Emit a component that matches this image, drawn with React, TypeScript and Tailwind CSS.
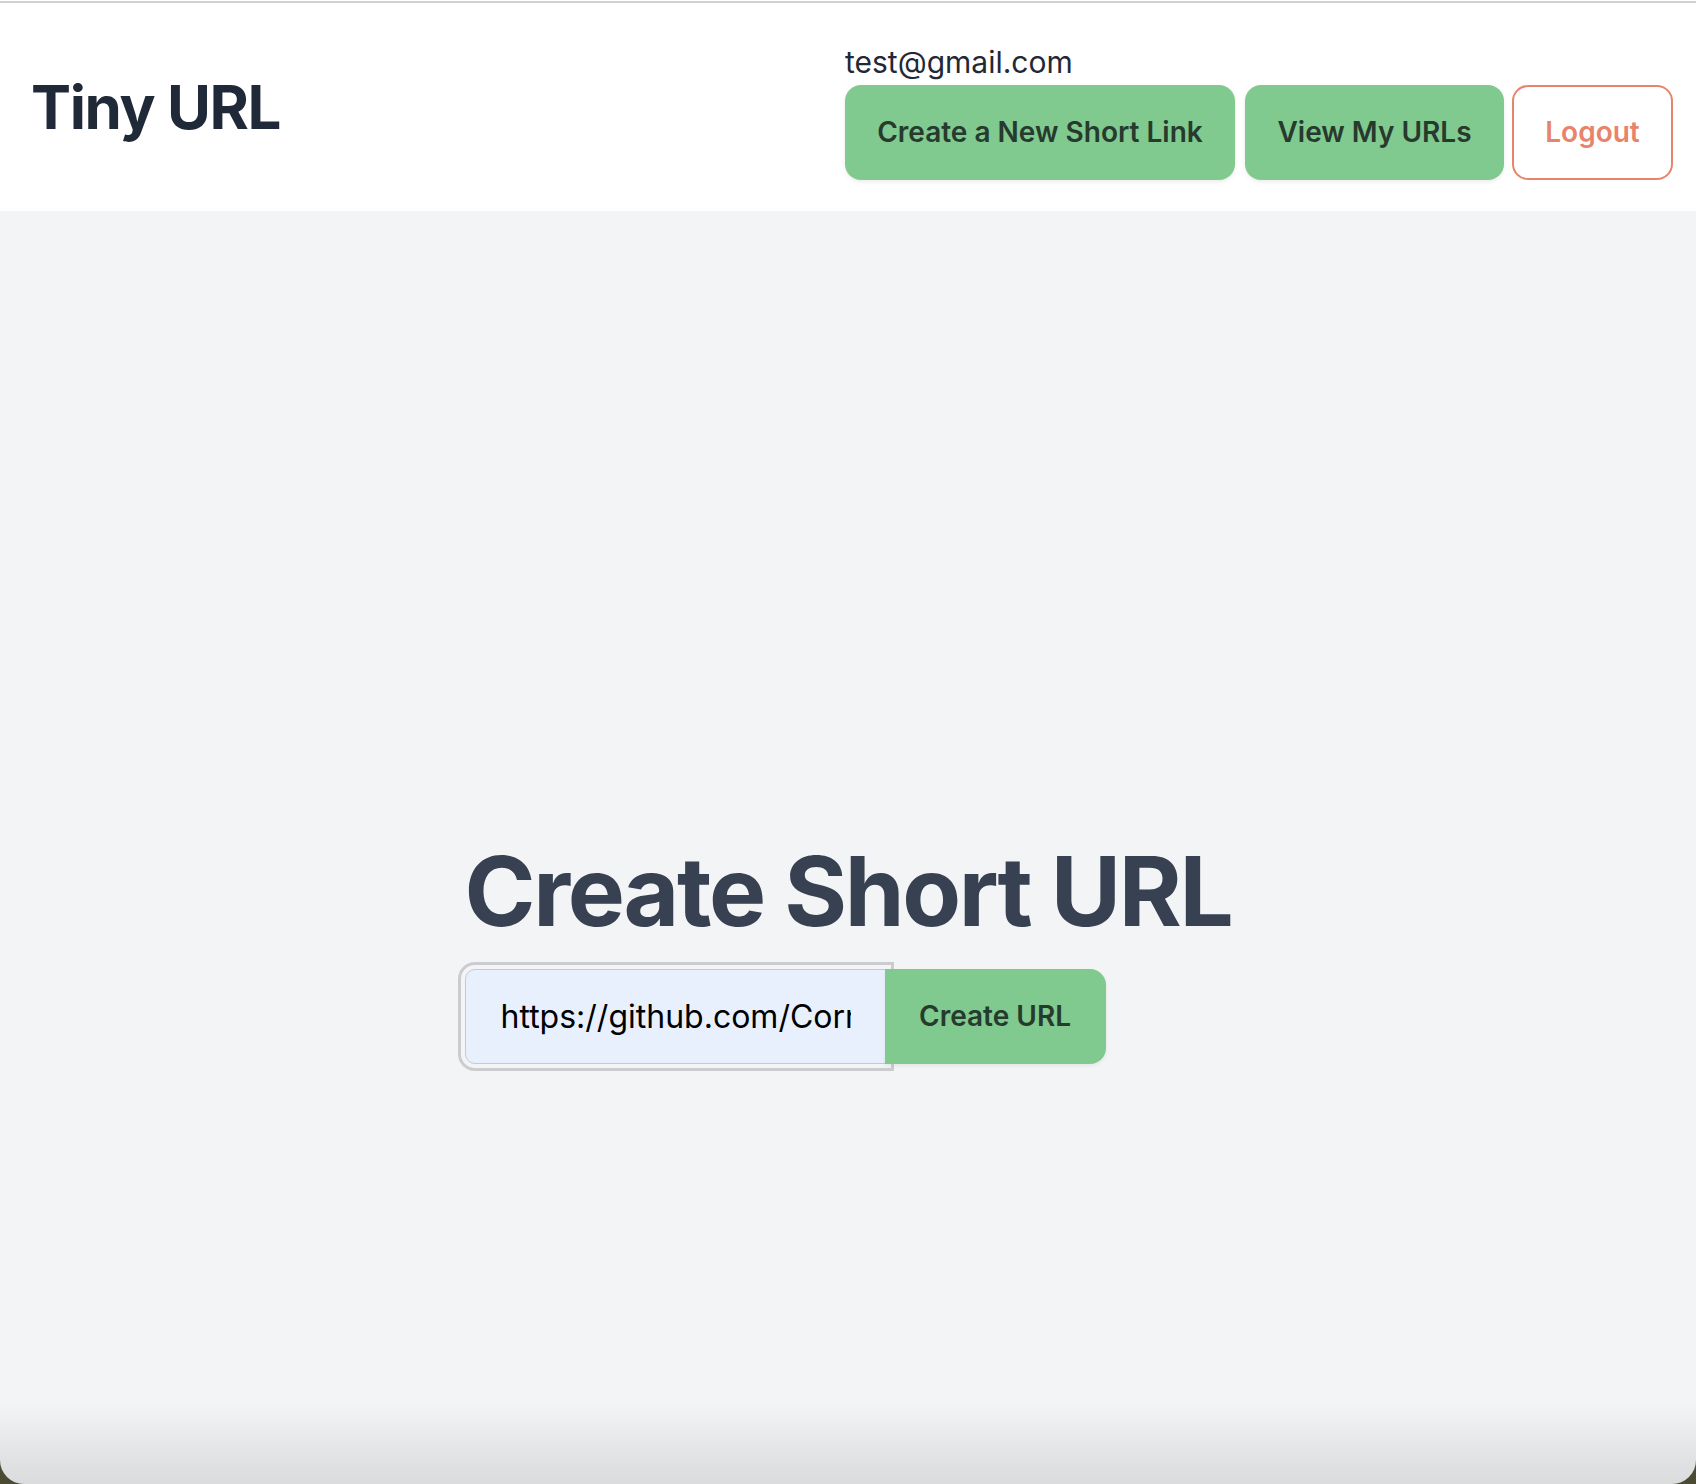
import { useState } from "react";

const font = { fontFamily: "Inter, 'Noto Sans', sans-serif" };

const Header = () => {
  return (
    <header className="flex flex-row items-center justify-between bg-white h-[208px] pl-[31px] pr-[23px]">
      <div className="text-[60px] font-bold leading-none text-[#1f2937] tracking-[-1.4px]">Tiny URL</div>
      <div className="flex flex-col items-start pt-[5px]">
        <div className="text-[30px] leading-[45px] text-[#1f2937]">test@gmail.com</div>
        <div className="flex flex-row items-center">
          <button className="w-[390px] h-[95px] mr-[10px] flex items-center justify-center rounded-[16px] bg-[#80c98f] text-[28px] font-semibold text-[#263a2d] shadow-[0_2px_4px_rgba(0,0,0,0.08)]">
            Create a New Short Link
          </button>
          <button className="w-[259px] h-[95px] mr-2 flex items-center justify-center rounded-[16px] bg-[#80c98f] text-[28px] font-semibold text-[#263a2d] shadow-[0_2px_4px_rgba(0,0,0,0.08)]">
            View My URLs
          </button>
          <button className="w-[161px] h-[95px] flex items-center justify-center rounded-[16px] border-2 border-[#e8846c] bg-white text-[28px] font-semibold text-[#e8846c]">
            Logout
          </button>
        </div>
      </div>
    </header>
  );
};

const CreateForm = () => {
  const [url, setUrl] = useState("https://github.com/CornellTech/tiny-url-shortener");
  return (
    <div className="flex flex-col items-start">
      <h1 className="text-[96px] font-bold leading-none text-[#374151] tracking-[-2.3px]">Create Short URL</h1>
      <div className="flex flex-row mt-[30px]">
        <input
          className="w-[422px] h-[95px] px-[35px] rounded-l-[10px] border border-[#c3cad6] bg-[#e8f0fe] text-[32px] text-black outline-solid outline-[3px] outline-[#cbcbd0] outline-offset-[4px]"
          value={url}
          onChange={(e) => setUrl(e.target.value)}
        />
        <button className="relative w-[221px] h-[95px] -ml-[2px] flex items-center justify-center rounded-r-[16px] bg-[#80c98f] text-[28px] font-semibold text-[#263a2d] shadow-[0_2px_4px_rgba(0,0,0,0.06)]">
          Create URL
        </button>
      </div>
    </div>
  );
};

export default function App() {
  return (
    <div className="h-screen overflow-hidden bg-[#f3f4f6]" style={font}>
      <div className="h-px bg-white" />
      <div className="h-[2px] bg-[#d0d0d0]" />
      <Header />
      <main className="min-h-screen flex flex-col items-center justify-center bg-[#f3f4f6]">
        <CreateForm />
      </main>
      <div className="pointer-events-none fixed inset-0 rounded-b-[24px] shadow-[0_0_0_40px_#4b4a33] bg-[linear-gradient(to_bottom,transparent_calc(100%-80px),rgba(0,0,0,0.1))]" />
    </div>
  );
}
